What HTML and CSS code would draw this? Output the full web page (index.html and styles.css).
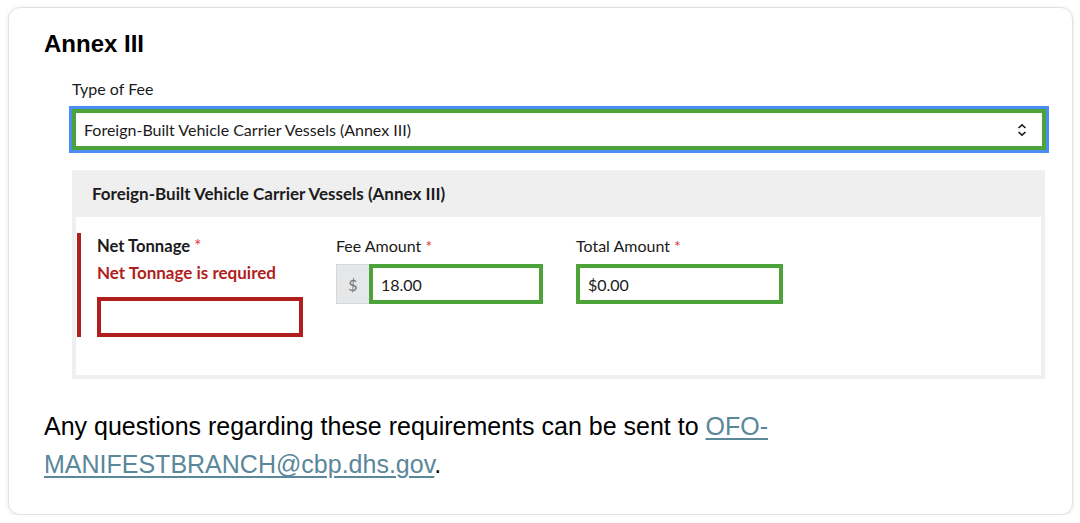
FILE: index.html
```html
<!DOCTYPE html>
<html lang="en">
<head>
<meta charset="utf-8">
<title>Annex III</title>
<link rel="stylesheet" href="styles.css">
</head>
<body>
<div class="card">
  <h2 class="title">Annex III</h2>
  <div class="form">
    <label class="label">Type of Fee</label>
    <div class="select">
      <span class="select-text">Foreign-Built Vehicle Carrier Vessels (Annex III)</span>
      <svg class="chev" width="10" height="14" viewBox="0 0 10 14"><path d="M1.5 5 L5 1.8 L8.5 5" fill="none" stroke="#1b1b1b" stroke-width="1.6"/><path d="M1.5 9 L5 12.2 L8.5 9" fill="none" stroke="#1b1b1b" stroke-width="1.6"/></svg>
    </div>
    <div class="fieldset">
      <div class="legend">Foreign-Built Vehicle Carrier Vessels (Annex III)</div>
      <div class="fs-body">
        <div class="group error">
          <div class="label bold">Net Tonnage <span class="req">*</span></div>
          <div class="err-msg">Net Tonnage is required</div>
          <div class="input input-error"></div>
        </div>
        <div class="group">
          <div class="label">Fee Amount <span class="req">*</span></div>
          <div class="input-group">
            <span class="prefix">$</span>
            <div class="input input-ok grow">18.00</div>
          </div>
        </div>
        <div class="group">
          <div class="label">Total Amount <span class="req">*</span></div>
          <div class="input input-ok">$0.00</div>
        </div>
      </div>
    </div>
  </div>
  <p class="note">Any questions regarding these requirements can be sent to <a href="#">OFO-MANIFESTBRANCH@cbp.dhs.gov</a>.</p>
</div>
</body>
</html>
```

FILE: styles.css
```css
* { box-sizing: border-box; }
html, body { margin: 0; background: #ffffff; }
body { padding: 7px 7px 0 8px; font-family: Lato, "Open Sans", sans-serif; color: #1b1b1b; }

.card {
  height: 508px;
  border: 1px solid #e2e2e2;
  border-radius: 12px;
  box-shadow: 0 1px 4px rgba(0,0,0,0.10);
  background: #fff;
  padding: 22px 30px 0 35px;
}

.title {
  margin: 0;
  font-family: "Liberation Sans", Arial, sans-serif;
  font-weight: 700;
  font-size: 24px;
  line-height: 28px;
  color: #000;
}

.form { margin: 21px 0 0 28px; width: 974px; }

.label { display: block; font-size: 16px; line-height: 20px; color: #1b1b1b; }
.label.bold { font-weight: 700; font-size: 16.6px; }
.req { color: #d83933; font-weight: 400; }

.select {
  margin-top: 10px;
  height: 41px;
  border: 4px solid #4ca33a;
  outline: 3px solid #4a8ef5;
  display: flex;
  align-items: center;
  justify-content: space-between;
  padding: 0 15px 0 8px;
  font-size: 16px;
}
.chev { display: block; }

.fieldset {
  margin-top: 20px;
  width: 973px;
  background: #efefef;
  padding: 0 4px 4px 4px;
}
.legend {
  height: 47px;
  display: flex;
  align-items: center;
  padding-left: 16px;
  font-weight: 700;
  font-size: 17px;
}
.fs-body {
  background: #fff;
  display: flex;
  gap: 33px;
  padding: 16px 0 38px 1px;
}
.group { width: 207px; display: flex; flex-direction: column; }
.group.error {
  width: 226px;
  border-left: 4px solid #b01e1e;
  padding-left: 16px;
}
.group .label { margin-top: 3px; }
.err-msg { margin-top: 7px; color: #b01e1e; font-weight: 700; font-size: 17px; line-height: 20px; }
.input {
  height: 40px;
  margin-top: 8px;
  background: #fff;
  display: flex;
  align-items: center;
  padding-left: 8px;
  font-size: 16px;
}
.group.error .input { margin-top: 14px; }
.input-error { border: 4px solid #b01e1e; }
.input-ok { border: 4px solid #4ca33a; }
.input-group { display: flex; margin-top: 8px; height: 40px; }
.input-group .input { margin-top: 0; }
.prefix {
  width: 33px;
  background: #e6e7e9;
  border: 1px solid #d6d7d9;
  border-right: 0;
  color: #71767a;
  display: flex;
  align-items: center;
  justify-content: center;
  font-size: 16px;
}
.grow { flex: 1; }

.note {
  margin: 28px 0 0 0;
  font-family: "Liberation Sans", sans-serif;
  font-size: 25px;
  line-height: 38px;
  color: #000;
}
.note a { color: #5a8799; text-decoration: underline; text-underline-offset: 3px; }
```
